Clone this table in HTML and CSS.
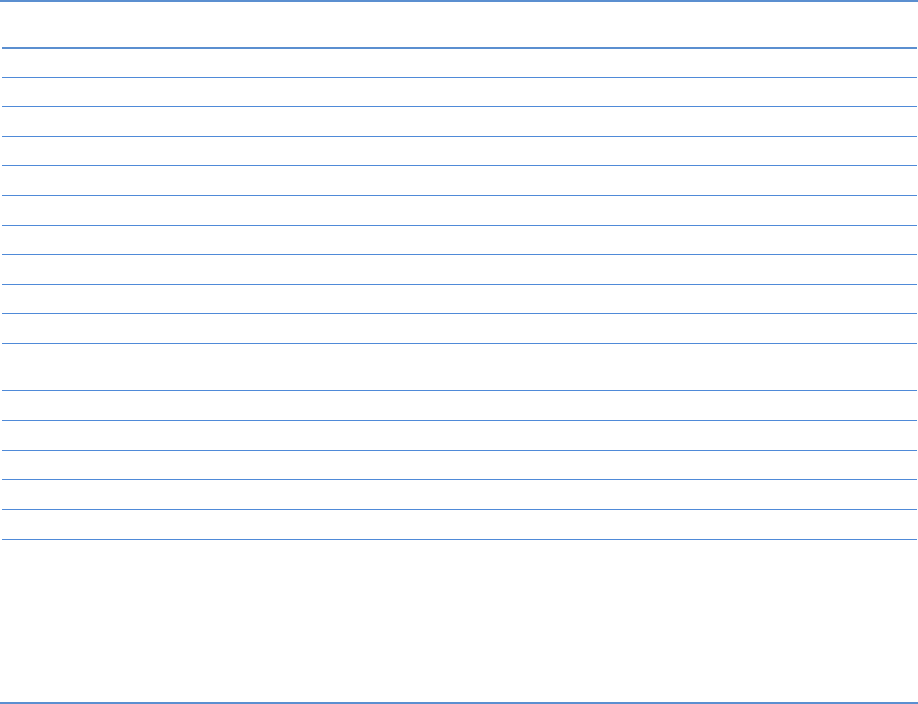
FILE: index.html
```html
<!DOCTYPE html>
<html lang="en">
<head>
  <meta charset="UTF-8">
  <meta name="viewport" content="width=device-width, initial-scale=1.0">
  <title>Table</title>
  <link rel="stylesheet" href="styles.css">
</head>
<body>
  <div class="sheet">
    <div class="grid">
      <div class="grid-head"></div>
      <div class="row"></div>
      <div class="row"></div>
      <div class="row long"></div>
      <div class="row"></div>
      <div class="row long"></div>
      <div class="row long"></div>
      <div class="row"></div>
      <div class="row long"></div>
      <div class="row"></div>
      <div class="row long"></div>
      <div class="row tall"></div>
      <div class="row long"></div>
      <div class="row long"></div>
      <div class="row"></div>
      <div class="row long"></div>
      <div class="row long"></div>
    </div>
  </div>
</body>
</html>
```
FILE: styles.css
```css
* {
  box-sizing: border-box;
}
body {
  margin: 0;
  font-family: 'Liberation Sans', Arial, sans-serif;
  background: #fff;
}
.sheet {
  height: 704px;
  border-top: 2px solid #5b8fd0;
  border-bottom: 2px solid #5b8fd0;
  display: flex;
  flex-direction: column;
}
.grid {
  display: flex;
  flex-direction: column;
  padding: 0 1px 0 2px;
}
.grid-head {
  height: 47px;
  border-bottom: 2px solid #5b8fd0;
}
.row {
  height: 29px;
  border-bottom: 1px solid #4f8ad8;
}
.row.long {
  height: 30px;
}
.row.tall {
  height: 47px;
}
```
